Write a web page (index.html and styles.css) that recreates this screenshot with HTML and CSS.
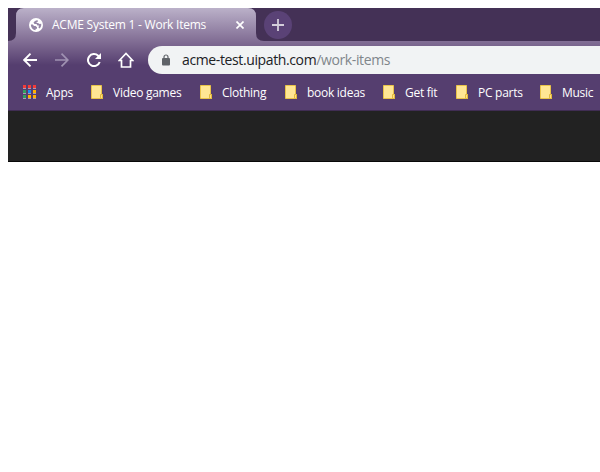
FILE: index.html
```
<!DOCTYPE html>
<html lang="en">
<head>
<meta charset="utf-8">
<title>ACME System 1 - Work Items</title>
<link rel="stylesheet" href="styles.css">
</head>
<body>
<svg width="0" height="0" class="defs">
  <symbol id="folder" viewBox="0 0 12 14"><path d="M.5.5h10v9h1v4H.5z" fill="#ffe694" stroke="#e9c349"/><path d="M9.5 13.500V9.500h2v4z" fill="#ffe082" stroke="#e2b93d"/></symbol>
</svg>
<main class="browser">
  <header class="strip">
    <svg class="strip-shape" width="592" height="33" viewBox="0 0 592 33"><path d="M0 0H592V33H256Q248 33 248 25V8Q248 0 240 0H16Q8 0 8 8V25Q8 33 0 33Z" fill="#443156"/></svg>
    <div class="tab">
      <svg class="globe" width="14" height="14" viewBox="0 0 14 14"><circle cx="7" cy="7" r="7" fill="#fff"/><path d="M8.500 2L6 3 4.500 4.500 5.500 6H7.500L8.500 7.500H10L9.500 9.500 10.500 10.500C12 9.300 12.500 7.500 12.200 5.800L10.500 6 9 5H7L8.800 3.700ZM1.900 6.500C1.800 9.500 4 12 6.500 12.200L6.700 10.800H8V9.200L6.500 8H5L3.800 6.500Z" fill="#9587a6"/></svg>
      <span class="title">ACME System 1 - Work Items</span>
      <svg class="close" width="8" height="8" viewBox="0 0 8 8"><path d="M.5.5l7 7M7.500.5l-7 7" stroke="#fff" stroke-width="1.700"/></svg>
    </div>
    <div class="new-tab"><svg width="12" height="12" viewBox="0 0 12 12"><path d="M6 0v12M0 6h12" stroke="#d4cedb" stroke-width="1.800"/></svg></div>
  </header>
  <nav class="toolbar">
    <svg width="14" height="14" viewBox="0 0 14 14"><path d="M14 7H1.500M7.500.7L1.200 7l6.300 6.300" fill="none" stroke="#fff" stroke-width="1.900"/></svg>
    <svg width="14" height="14" viewBox="0 0 14 14"><path d="M0 7h12.500M6.500.7L12.800 7l-6.300 6.300" fill="none" stroke="#a092b2" stroke-width="1.700"/></svg>
    <svg width="14" height="14" viewBox="0 0 14 14"><path d="M12.700 9A6 6 0 1 1 11.200 2.800L12.300 4" fill="none" stroke="#fff" stroke-width="2"/><path d="M14 0v6H8z" fill="#fff"/></svg>
    <svg class="home" width="16" height="16" viewBox="0 0 16 16"><path d="M1.300 8.500L8 1.500 14.700 8.500H12.500V15H3.500V8.500Z" fill="none" stroke="#fff" stroke-width="1.700"/></svg>
    <div class="address">
      <svg width="8" height="12" viewBox="0 0 8 12"><path d="M2 5V3a2 2 0 0 1 4 0v2" fill="none" stroke="#5f6368" stroke-width="1.200"/><rect y="4" width="8" height="7.500" rx="1" fill="#5f6368"/></svg>
      <span class="url">acme-test.uipath.com<span class="path">/work-items</span></span>
    </div>
  </nav>
  <nav class="bookmarks">
    <a class="apps"><svg width="13" height="14" viewBox="0 0 13 14" shape-rendering="crispEdges"><path d="M0 3h3v1H0zM5 3h3v1H5zM10 3h3v1h-3zM0 8h3v1H0zM5 8h3v1H5zM10 8h3v1h-3zM0 13h3v1H0zM5 13h3v1H5zM10 13h3v1h-3z" fill="#a79bb5"/><path d="M0 0h3v3H0zM5 0h3v3H5zM10 0h3v3h-3z" fill="#f43b38"/><path d="M0 5h3v3H0zM0 10h3v3H0z" fill="#30a060"/><path d="M5 5h3v3H5z" fill="#1b88f5"/><path d="M10 5h3v3h-3zM5 10h3v3H5zM10 10h3v3h-3z" fill="#ffb000"/></svg><span>Apps</span></a>
    <a class="games"><svg><use href="#folder"/></svg><span>Video games</span></a>
    <a class="clothing"><svg><use href="#folder"/></svg><span>Clothing</span></a>
    <a class="books"><svg><use href="#folder"/></svg><span>book ideas</span></a>
    <a class="fit"><svg><use href="#folder"/></svg><span>Get fit</span></a>
    <a class="parts"><svg><use href="#folder"/></svg><span>PC parts</span></a>
    <a class="music"><svg><use href="#folder"/></svg><span>Music</span></a>
  </nav>
  <section class="page-bar"></section>
</main>
</body>
</html>
```
FILE: styles.css
```
* { box-sizing: border-box; }
body { margin: 0; padding: 8px 0 0 8px; background: #fff; font: 12px/16px "Open Sans", "Noto Sans", sans-serif; color: #fff; overflow: hidden; }
.defs { position: absolute; }
svg { display: block; flex: none; }
.browser { width: 592px; background: linear-gradient(#bbb1c9 0, #806c93 34px, #553e6f 57px); }
.strip { position: relative; display: flex; height: 33px; padding-left: 8px; }
.strip-shape { position: absolute; left: 0; top: 0; }
.tab { position: relative; display: flex; align-items: center; width: 240px; height: 33px; padding: 0 12px 0 13px; }
.title { width: 183px; margin-left: 9px; white-space: nowrap; letter-spacing: -.23px; }
.close { margin-left: 1px; }
.new-tab { position: relative; display: flex; align-items: center; justify-content: center; width: 28px; height: 28px; margin: 3px 0 0 8px; border-radius: 50%; background: #5a4276; }
.toolbar { display: flex; align-items: center; height: 38px; padding-left: 15px; gap: 18px; }
.home { margin-left: -1px; }
.address { display: flex; align-items: center; flex: 1; height: 28px; margin-left: -4px; padding-left: 14px; border-radius: 14px 0 0 14px; background: #f1f3f4; }
.url { margin-left: 12px; color: #202124; font-size: 14px; line-height: 20px; letter-spacing: -.38px; white-space: nowrap; }
.path { color: #80868b; }
.bookmarks { display: flex; height: 32px; padding: 5px 0 0 15px; border-bottom: 1px solid #402d53; }
.bookmarks a { display: flex; height: 16px; align-items: center; flex: none; white-space: nowrap; letter-spacing: -.27px; }
.bookmarks svg { width: 12px; height: 14px; margin-right: 10px; }
.bookmarks .apps svg { width: 13px; }
.bookmarks span { padding-top: 1px; }
.apps { width: 68px; }
.games { width: 109px; }
.clothing { width: 85px; }
.books { width: 98px; }
.fit { width: 73px; }
.parts { width: 84px; }
.page-bar { height: 51px; background: #222; border-bottom: 1px solid #080808; }
```
